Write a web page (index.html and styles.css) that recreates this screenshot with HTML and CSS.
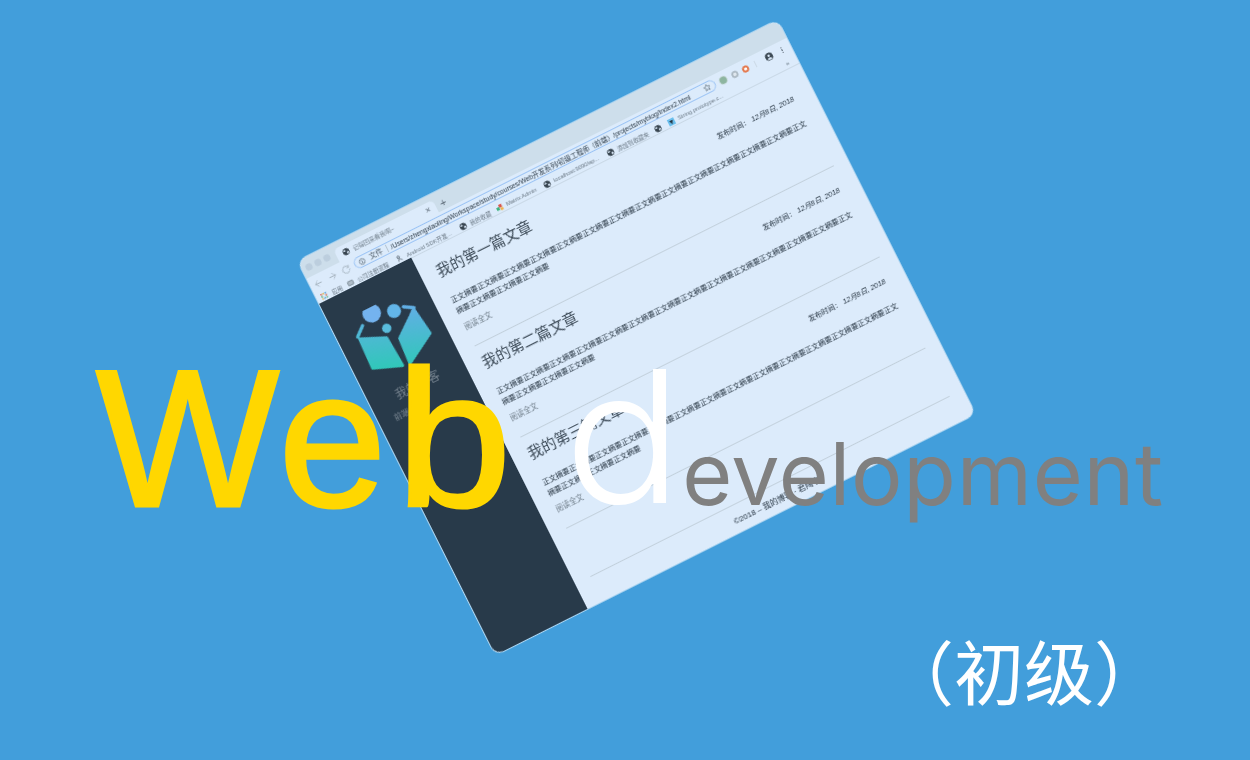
FILE: index.html
```html
<!DOCTYPE html>
<html lang="zh">
<head>
<meta charset="utf-8">
<title>Web development（初级）</title>
<link rel="stylesheet" href="styles.css">
</head>
<body>
<svg class="defs" width="0" height="0" aria-hidden="true">
  <symbol id="globe" viewBox="0 0 16 16">
    <circle cx="8" cy="8" r="8" fill="#37444f"/>
    <path d="M3 4l3-1 2 2-1 2-3 0-2-1zM9 9l4-1 1 3-3 3-2-2z" fill="#dcebfb"/>
  </symbol>
  <linearGradient id="logoFill" gradientUnits="userSpaceOnUse" x1="10" y1="-26" x2="-12" y2="32">
    <stop offset="0" stop-color="#62aee6"/>
    <stop offset="1" stop-color="#2fc8b8"/>
  </linearGradient>
</svg>

<main class="stage">
  <article class="window">
    <div class="tabstrip">
      <div class="dots"><i></i><i></i><i></i></div>
      <div class="tab">
        <svg class="ico"><use href="#globe"/></svg>
        <span class="tab-title">记得回来看我啊~</span>
        <span class="tab-close">×</span>
      </div>
      <span class="tab-new">+</span>
    </div>

    <div class="toolbar">
      <svg class="nav" viewBox="0 0 10 10"><path d="M9 5H1.5M5 1.5L1.5 5 5 8.5" fill="none" stroke="#a9b7c3" stroke-width="1.1"/></svg>
      <svg class="nav" viewBox="0 0 10 10"><path d="M1 5h7.5M5 1.5L8.5 5 5 8.5" fill="none" stroke="#a9b7c3" stroke-width="1.1"/></svg>
      <svg class="nav" viewBox="0 0 10 10"><path d="M8.5 3.2A4 4 0 1 0 9 5.5M8.8 1v2.6H6.2" fill="none" stroke="#a9b7c3" stroke-width="1.1"/></svg>
      <div class="omnibox">
        <svg class="info" viewBox="0 0 10 10"><circle cx="5" cy="5" r="4" fill="none" stroke="#4f5d69" stroke-width="1"/><path d="M5 4.4v3M5 2.6v1" stroke="#4f5d69" stroke-width="1"/></svg>
        <span class="proto">文件</span>
        <span class="url">/Users/zhengxiaoling/Workspace/study/courses/Web开发系列/初级工程师（前端）/projects/myblog/index2.html</span>
        <svg class="star" viewBox="0 0 12 12"><path d="M6 1l1.5 3.4 3.6.4-2.7 2.4.8 3.6L6 9l-3.2 1.8.8-3.6L.9 4.8l3.6-.4z" fill="none" stroke="#4f5d69" stroke-width="1"/></svg>
      </div>
      <div class="ext">
        <i class="ext-green"></i><i class="ext-grey"></i><i class="ext-orange"></i>
      </div>
      <svg class="avatar" viewBox="0 0 16 16"><circle cx="8" cy="8" r="8" fill="#37444f"/><circle cx="8" cy="6" r="2.6" fill="#dcebfb"/><path d="M3 12.6a6 6 0 0 1 10 0 6.4 6.4 0 0 1-10 0z" fill="#dcebfb"/></svg>
      <span class="kebab"><i></i><i></i><i></i></span>
    </div>

    <nav class="bookmarks">
      <span class="bm bm-apps">
        <svg class="ico" viewBox="0 0 9 9"><g fill="#d9694f"><rect x="0" y="0" width="2" height="2"/><rect x="6" y="3" width="2" height="2"/></g><g fill="#e3b54e"><rect x="3" y="0" width="2" height="2"/><rect x="0" y="6" width="2" height="2"/></g><g fill="#4f9fd9"><rect x="6" y="0" width="2" height="2"/><rect x="3" y="6" width="2" height="2"/></g><g fill="#5eb07c"><rect x="0" y="3" width="2" height="2"/><rect x="6" y="6" width="2" height="2"/></g></svg>
        应用
      </span>
      <span class="bm bm-company">
        <svg class="ico" viewBox="0 0 10 10"><rect x="1" y="2" width="8" height="6" rx="1" fill="#aebcc8" stroke="#4f5d69" stroke-width=".8"/></svg>
        公司注册流程
      </span>
      <span class="bm bm-android">
        <svg class="ico" viewBox="0 0 10 10"><circle cx="3.6" cy="2.6" r="1.8" fill="none" stroke="#37444f" stroke-width="1"/><path d="M3.6 4.6L2 9M4 5l4 3.5" fill="none" stroke="#37444f" stroke-width="1"/></svg>
        Android SDK开发...
      </span>
      <span class="bm bm-fav"><svg class="ico"><use href="#globe"/></svg>我的收藏</span>
      <span class="bm bm-matrix">
        <svg class="ico" viewBox="0 0 10 10"><rect x="0" y="3" width="4.5" height="4.5" fill="#3fb27f"/><rect x="4.5" y="0" width="4.5" height="4.5" fill="#d9564a"/><rect x="5.5" y="5" width="4" height="4" fill="#efb04a"/></svg>
        Matrix Admin
      </span>
      <span class="bm bm-local"><svg class="ico"><use href="#globe"/></svg>localhost:9090/ap...</span>
      <span class="bm bm-add"><svg class="ico"><use href="#globe"/></svg>添加到收藏夹</span>
      <span class="bm bm-solo"><svg class="ico"><use href="#globe"/></svg></span>
      <span class="bm bm-string">
        <svg class="ico" viewBox="0 0 10 10"><rect width="10" height="10" fill="#6cc0ee"/><path d="M2 3h6L6 6v2H4V6z" fill="#22303b"/></svg>
        String.prototype.c...
      </span>
      <span class="bm-more">»</span>
    </nav>

    <div class="page">
      <aside class="sidebar">
        <svg class="logo" viewBox="-40 -35 80 80">
          <circle cx="-9.3" cy="-29" r="9.3" fill="#74b3ef"/>
          <circle cx="11.7" cy="-21" r="7" fill="#62b5e9"/>
          <circle cx="-2.6" cy="-8.8" r="4.7" fill="#59bcdc"/>
          <path d="M4.5 6L24 -9 30 -14 34 15 2.5 33z" fill="url(#logoFill)" stroke="url(#logoFill)" stroke-width="3" stroke-linejoin="round"/>
          <path d="M-31.5 -11.5L-7 -0.5-5 31.5-33 20.5z" fill="url(#logoFill)" stroke="url(#logoFill)" stroke-width="3" stroke-linejoin="round"/>
          <path d="M22 -20.5L31 -15M-32.5 -14L-23 -22" fill="none" stroke="url(#logoFill)" stroke-width="3.4" stroke-linecap="round"/>
        </svg>
        <div class="site-name">我的博客</div>
        <div class="site-sub">前端</div>
      </aside>

      <section class="content">
        <div class="post">
          <header class="post-head"><h2>我的第一篇文章</h2><p class="meta">发布时间： <em>12月8日, 2018</em></p></header>
          <p class="excerpt">正文摘要正文摘要正文摘要正文摘要正文摘要正文摘要正文摘要正文摘要正文摘要正文摘要正文摘要正文摘要正文摘要正文摘要正文摘要正文摘要正文摘要</p>
          <a class="more">阅读全文</a>
        </div>
        <div class="post">
          <header class="post-head"><h2>我的第二篇文章</h2><p class="meta">发布时间： <em>12月8日, 2018</em></p></header>
          <p class="excerpt">正文摘要正文摘要正文摘要正文摘要正文摘要正文摘要正文摘要正文摘要正文摘要正文摘要正文摘要正文摘要正文摘要正文摘要正文摘要正文摘要正文摘要</p>
          <a class="more">阅读全文</a>
        </div>
        <div class="post">
          <header class="post-head"><h2>我的第三篇文章</h2><p class="meta">发布时间： <em>12月8日, 2018</em></p></header>
          <p class="excerpt">正文摘要正文摘要正文摘要正文摘要正文摘要正文摘要正文摘要正文摘要正文摘要正文摘要正文摘要正文摘要正文摘要正文摘要正文摘要正文摘要正文摘要</p>
          <a class="more">阅读全文</a>
        </div>
        <footer class="foot">©2018 – 我的博客 · 君陶李</footer>
      </section>
    </div>
  </article>

  <h1 class="headline"><span class="web">We<span class="b">b</span></span><span class="d">d</span><span class="rest">evelopment</span></h1>
  <p class="level">（初级）</p>
</main>
</body>
</html>
```

FILE: styles.css
```css
* { box-sizing: border-box; }
html, body { margin: 0; height: 100%; }
body { background: #429edb; overflow: hidden; font-family: "Liberation Sans", "Noto Sans CJK SC", sans-serif; }
.defs { position: absolute; }
.stage { position: relative; width: 1250px; height: 760px; overflow: hidden; }

/* tilted browser window */
.window {
  position: absolute; left: 368px; top: 116.5px;
  width: 537px; height: 441px;
  background: #dcebfb; border-radius: 9px;
  overflow: hidden;
  transform: rotate(-26.66deg);
  box-shadow: 0 0 0 .8px rgba(225,238,250,.85);
  filter: blur(.3px);
  display: flex; flex-direction: column;
  color: #1f2d3a;
}
.ico { width: 7px; height: 7px; flex: none; }

.tabstrip { height: 20px; background: #cddeeb; display: flex; align-items: flex-end; flex: none; padding-left: 4px; }
.dots { display: flex; gap: 3.5px; align-self: flex-start; margin-top: 7px; width: 33px; }
.dots i { width: 6.5px; height: 6.5px; border-radius: 50%; background: #bccede; }
.tab { width: 111px; height: 14px; background: #dcebfb; border-radius: 5px 5px 0 0; display: flex; align-items: center; padding: 0 6px 0 7px; gap: 4px; font-size: 6px; color: #75838f; }
.tab-title { flex: 1; }
.tab-close { font-size: 9px; color: #5d6b77; line-height: 1; }
.tab-new { font-size: 11px; color: #5d6b77; line-height: 14px; margin-left: 5px; }

.toolbar { height: 18px; display: flex; align-items: center; flex: none; padding-left: 4px; }
.nav { width: 9px; height: 9px; margin-right: 6.5px; flex: none; }
.omnibox { width: 404px; margin-left: -1.5px; height: 12.5px; border: 1.2px solid #9cc4f5; border-radius: 7px; display: flex; align-items: center; padding: 0 5px 0 4px; flex: none; }
.info { width: 7px; height: 7px; flex: none; }
.proto { font-size: 7.3px; color: #4f5d69; margin-left: 5px; padding-right: 4px; border-right: 1px solid #b7c6d3; line-height: 8px; flex: none; }
.url { font-size: 6.8px; color: #2c3a47; margin-left: 4px; flex: 1; white-space: nowrap; }
.star { width: 7.5px; height: 7.5px; flex: none; }
.ext { display: flex; gap: 5.5px; margin-left: 5px; padding-right: 7px; margin-right: 11px; border-right: 1px solid #cbd9e6; flex: none; }
.ext i { width: 7px; height: 7px; border-radius: 50%; display: block; }
.ext-green { background: #8db5a0; box-shadow: 0 0 0 .6px #b4cabf; }
.ext-grey { background: radial-gradient(circle, #dfe7ee 0 28%, #a9b6c0 45%); }
.ext-orange { background: radial-gradient(circle, #fff 0 22%, #e4764a 38%); }
.avatar { width: 8px; height: 8px; flex: none; }
.kebab { display: flex; flex-direction: column; gap: 1px; margin-left: 10px; }
.kebab i { width: 1.2px; height: 1.2px; background: #4f5d69; display: block; }

.bookmarks { height: 10px; display: flex; align-items: center; flex: none; padding-left: 5px; font-size: 5.8px; color: #6b7985; white-space: nowrap; }
.bm { display: inline-flex; align-items: center; gap: 4.5px; flex: none; }
.bm-apps { width: 28.5px; }
.bm-company { width: 55px; }
.bm-android { width: 71px; }
.bm-fav { width: 41px; }
.bm-matrix { width: 53px; }
.bm-local { width: 71px; }
.bm-add { width: 53px; }
.bm-solo { width: 15px; }
.bm-string { width: 62px; }
.bm-more { font-size: 6px; color: #5d6b77; margin-left: auto; padding-right: 9px; }

.page { flex: 1; display: flex; min-height: 0; }
.sidebar { width: 103px; background: #283a4a; flex: none; padding-top: 26px; display: flex; flex-direction: column; align-items: center; }
.logo { width: 80px; height: 80px; flex: none; }
.site-name { font-size: 12px; color: #76838f; margin-top: 4.4px; line-height: 14px; }
.site-sub { font-size: 8px; color: #76838f; margin-top: 8px; align-self: flex-start; margin-left: 16px; line-height: 9px; }

.content { flex: 1; min-width: 0; padding: 14.5px 15px 0 16.5px; box-shadow: inset 0 1px #c9d8e6; }
.post { height: 102px; border-bottom: 1px solid #c3d1dd; padding-top: 8.5px; }
.post:first-child { height: 93.5px; padding-top: 0; }
.post-head { display: flex; justify-content: space-between; align-items: flex-end; height: 20px; }
.post-head h2 { margin: 0; font-size: 15px; font-weight: 400; line-height: 20px; color: #3c4a57; }
.meta { margin: 0 6px 0 0; font-size: 7.3px; line-height: 10px; }
.meta em { font-style: italic; }
.excerpt { margin: 16px 0 0; font-size: 7.35px; line-height: 12px; width: 398px; }
.more { display: block; margin-top: 7.5px; font-size: 7.5px; line-height: 10px; color: #6d7b87; }
.foot { margin-top: 53px; border-top: 1px solid #c3d1dd; padding-top: 11px; font-size: 8px; text-align: center; line-height: 10px; }

/* big overlaid title */
.headline { position: absolute; left: 96px; top: 318px; margin: 0; display: flex; align-items: baseline; font-weight: 400; line-height: 240px; white-space: nowrap; }
.web { font-size: 194px; color: #ffd700; font-family: "Liberation Sans", sans-serif; letter-spacing: 3px; -webkit-text-stroke: 3px #ffd700; margin-right: 58px; position: relative; top: 1px; }
.b { display: inline-block; margin-left: 6px; transform: scaleX(1.07); transform-origin: left; }
.d { display: inline-block; font-size: 184px; color: #fff; font-family: Inter, sans-serif; font-weight: 300; margin-right: 7px; position: relative; top: -2px; transform: scaleX(1.07); transform-origin: left; }
.rest { font-size: 86px; color: #808080; font-family: Inter, sans-serif; font-weight: 380; letter-spacing: .7px; }
.level { position: absolute; left: 884px; top: 618px; margin: 0; font-size: 70px; line-height: 104px; color: #fff; font-family: "Noto Sans CJK SC", sans-serif; font-weight: 400; white-space: nowrap; }
```
